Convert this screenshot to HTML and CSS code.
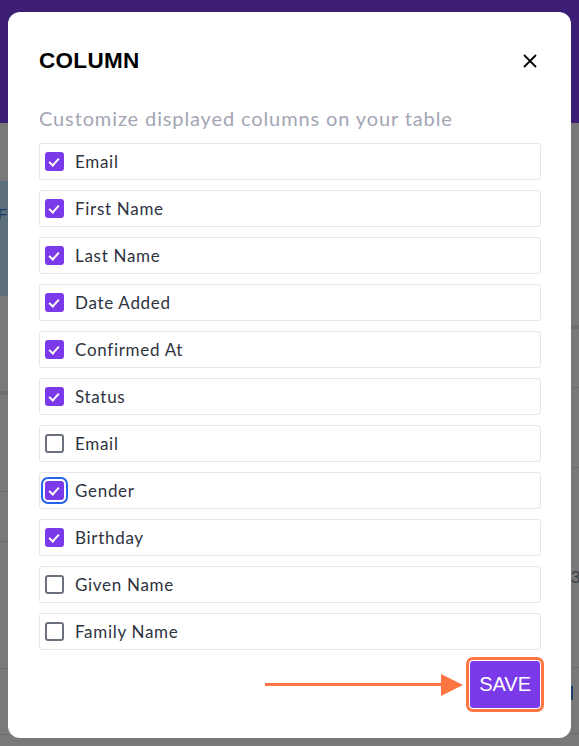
FILE: index.html
```html
<!DOCTYPE html>
<html>
<head>
<meta charset="utf-8">
<link rel="stylesheet" href="styles.css">
</head>
<body>
<div class="page">
  <div class="topbar"></div>
  <div class="backdrop">
    <div class="strip strip-left">
      <div class="seg" style="height:58px"></div>
      <div class="seg slate" style="height:115px"><span class="peek">FC</span></div>
      <div class="seg" style="height:95px"></div>
      <div class="seg band"></div>
      <div class="seg" style="height:96px"></div>
      <div class="seg line"></div>
      <div class="seg" style="height:49px"></div>
      <div class="seg line"></div>
      <div class="seg" style="height:126px"></div>
      <div class="seg line"></div>
      <div class="seg" style="height:65px"></div>
      <div class="seg line"></div>
    </div>
    <div class="spacer"></div>
    <div class="strip strip-right">
      <div class="seg" style="height:202px"></div>
      <div class="seg band"></div>
      <div class="seg" style="height:58px"></div>
      <div class="seg line"></div>
      <div class="seg" style="height:79px"></div>
      <div class="seg line"></div>
      <div class="seg num" style="height:199px"><span>3</span></div>
      <div class="seg line"></div>
      <div class="seg cursor" style="height:65px"><span></span></div>
      <div class="seg line"></div>
    </div>
  </div>
</div>

<div class="modal">
  <div class="modal-head">
    <h2 class="title">COLUMN</h2>
    <button class="close" aria-label="Close">
      <svg width="14" height="14" viewBox="0 0 14 14"><path d="M1.5 1.5 L12.5 12.5 M12.5 1.5 L1.5 12.5" stroke="#000" stroke-width="1.8" fill="none" stroke-linecap="round"/></svg>
    </button>
  </div>
  <p class="subtitle">Customize displayed columns on your table</p>
  <ul class="cols">
    <li class="col"><span class="cb on"></span><span class="lbl">Email</span></li>
    <li class="col"><span class="cb on"></span><span class="lbl">First Name</span></li>
    <li class="col"><span class="cb on"></span><span class="lbl">Last Name</span></li>
    <li class="col"><span class="cb on"></span><span class="lbl">Date Added</span></li>
    <li class="col"><span class="cb on"></span><span class="lbl">Confirmed At</span></li>
    <li class="col"><span class="cb on"></span><span class="lbl">Status</span></li>
    <li class="col"><span class="cb"></span><span class="lbl">Email</span></li>
    <li class="col"><span class="cb on focus"></span><span class="lbl">Gender</span></li>
    <li class="col"><span class="cb on"></span><span class="lbl">Birthday</span></li>
    <li class="col"><span class="cb"></span><span class="lbl">Given Name</span></li>
    <li class="col"><span class="cb"></span><span class="lbl">Family Name</span></li>
  </ul>
  <div class="footer">
    <div class="arrow">
      <span class="shaft"></span>
      <svg width="22" height="22" viewBox="0 0 22 22"><path d="M0 0 L22 11 L0 22 Z" fill="#ff7541"/></svg>
    </div>
    <button class="save">SAVE</button>
  </div>
</div>
</body>
</html>
```
FILE: styles.css
```css
html, body {
  margin: 0;
  padding: 0;
}
body {
  width: 579px;
  height: 746px;
  overflow: hidden;
  background: #787978;
  font-family: Lato, "Noto Sans", sans-serif;
  position: relative;
}
.page {
  display: flex;
  flex-direction: column;
  height: 746px;
}
.topbar {
  height: 123px;
  background: #3c1f74;
}
.backdrop {
  flex: 1;
  display: flex;
}
.strip {
  width: 8px;
  display: flex;
  flex-direction: column;
  overflow: hidden;
}
.seg {
  flex: none;
  position: relative;
}
.slate {
  background: #5d6e7b;
  display: flex;
  align-items: center;
  padding-bottom: 50px;
  box-sizing: border-box;
}
.peek {
  font-family: "Liberation Sans", sans-serif;
  font-size: 15px;
  color: #1d3e66;
  margin-left: -2px;
}
.band {
  height: 4px;
  background: #6c6d6c;
}
.line {
  height: 1px;
  background: #6a6b6a;
}
.spacer {
  flex: 1;
}
.num {
  display: flex;
  align-items: center;
  padding-top: 20px;
  box-sizing: border-box;
}
.num span {
  font-family: "Liberation Sans", sans-serif;
  font-size: 17px;
  color: #3a404b;
  margin-left: 0px;
}
.cursor {
  display: flex;
  align-items: center;
}
.cursor span {
  width: 2px;
  height: 14px;
  background: #1d3e66;
  margin-left: 0px;
  margin-top: -16px;
}

.modal {
  position: absolute;
  top: 12px;
  left: 8px;
  width: 563px;
  height: 726px;
  box-sizing: border-box;
  background: #fff;
  border-radius: 12px;
  padding: 37px 30px 0 31px;
}
.modal-head {
  display: flex;
  align-items: center;
  justify-content: space-between;
  height: 24px;
}
.title {
  margin: 0;
  font-family: "Liberation Sans", Arial, sans-serif;
  font-weight: 700;
  font-size: 22.5px;
  line-height: 24px;
  color: #000;
  letter-spacing: 0.3px;
}
.close {
  border: 0;
  background: none;
  padding: 0;
  margin-right: 4px;
  width: 14px;
  height: 14px;
  display: flex;
}
.subtitle {
  margin: 33px 0 0;
  font-size: 20px;
  line-height: 24px;
  color: #a3a6b4;
  letter-spacing: 0.88px;
}
.cols {
  list-style: none;
  margin: 13px 0 0;
  padding: 0;
  display: flex;
  flex-direction: column;
  gap: 10px;
}
.col {
  height: 37px;
  box-sizing: border-box;
  border: 1.5px solid #e5e5eb;
  border-radius: 3px;
  display: flex;
  align-items: center;
  padding-left: 5px;
  gap: 11px;
}
.cb {
  width: 19px;
  height: 19px;
  box-sizing: border-box;
  border: 2px solid #6b717c;
  border-radius: 3px;
  position: relative;
  flex: none;
}
.cb.on {
  border: 0;
  background: #7b3ae9;
}
.cb.on::after {
  content: "";
  position: absolute;
  left: 6px;
  top: 4px;
  width: 4px;
  height: 8px;
  border-right: 2.2px solid #fff;
  border-bottom: 2.2px solid #fff;
  transform: rotate(42deg);
}
.cb.focus {
  outline: 2.5px solid #2563eb;
  outline-offset: 2px;
  border-radius: 3px;
}
.lbl {
  font-size: 17px;
  color: #2e3340;
  line-height: 20px;
  letter-spacing: 0.7px;
}
.footer {
  display: flex;
  justify-content: flex-end;
  align-items: center;
  margin-top: 10px;
  gap: 6px;
}
.arrow {
  display: flex;
  align-items: center;
}
.shaft {
  width: 176px;
  height: 3px;
  background: #ff7541;
}
.save {
  height: 49px;
  padding: 0 9px;
  border: 1px solid #fff;
  border-radius: 4px;
  background: #7b3ae9;
  color: #fff;
  font-family: "Liberation Sans", Arial, sans-serif;
  font-size: 20px;
  font-weight: 400;
  outline: 3px solid #ff7541;
  outline-offset: 0;
}
```
